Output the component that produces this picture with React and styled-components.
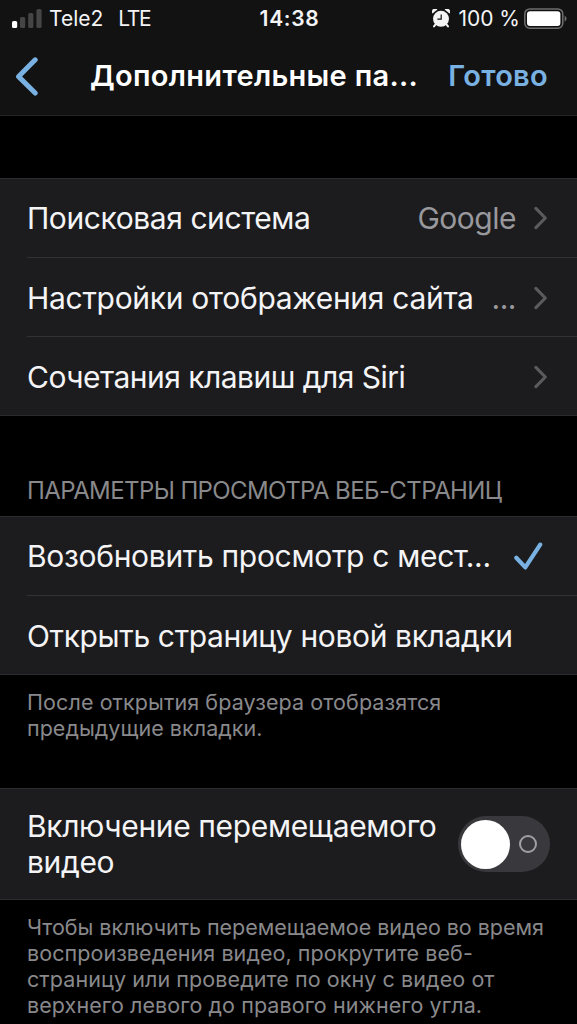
import React, {useState} from 'react';
import styled, {createGlobalStyle} from 'styled-components';

const App = () => {

    const [start, setStart] = useState('resume');
    const [pip, setPip] = useState(false);

    return (
        <Screen>
            <GlobalStyle/>
            <Header>
                <StatusBar>
                    <Carrier>
                        <SignalSvg/>
                        <CarrierName>Tele2</CarrierName>
                        <Network>LTE</Network>
                    </Carrier>
                    <Clock>14:38</Clock>
                    <Power>
                        <AlarmSvg/>
                        <Percent>100 %</Percent>
                        <BatterySvg/>
                    </Power>
                </StatusBar>
                <NavBar>
                    <BackButton aria-label={"Назад"}>
                        <BackSvg/>
                    </BackButton>
                    <Title>Дополнительные па...</Title>
                    <DoneButton>Готово</DoneButton>
                </NavBar>
            </Header>

            <Group $top={62}>
                <Row>
                    <Label $spacing={-0.42}>Поисковая система</Label>
                    <Value>Google</Value>
                    <ChevronSvg/>
                </Row>
                <Row>
                    <Label $spacing={-0.29}>Настройки отображения сайта</Label>
                    <Value>...</Value>
                    <ChevronSvg/>
                </Row>
                <Row>
                    <Label $spacing={-0.52}>Сочетания клавиш для Siri</Label>
                    <ChevronSvg/>
                </Row>
            </Group>

            <SectionTitle>ПАРАМЕТРЫ ПРОСМОТРА ВЕБ-СТРАНИЦ</SectionTitle>
            <Group $top={0}>
                <Row onClick={() => setStart('resume')}>
                    <Label $spacing={-0.31}>Возобновить просмотр с мест...</Label>
                    {start === 'resume' && <CheckSvg/>}
                </Row>
                <Row onClick={() => setStart('newTab')}>
                    <Label $spacing={-0.36}>Открыть страницу новой вкладки</Label>
                    {start === 'newTab' && <CheckSvg/>}
                </Row>
            </Group>
            <Note>
                <Line $spacing={0.09}>После открытия браузера отобразятся</Line>
                <Line $spacing={0.03}>предыдущие вкладки.</Line>
            </Note>

            <Group $top={47}>
                <SwitchRow>
                    <Label $spacing={-0.36}>
                        Включение перемещаемого<br/>
                        видео
                    </Label>
                    <Switch role={"switch"} aria-checked={pip} $on={pip} onClick={() => setPip(!pip)}>
                        <Knob/>
                        <OffMark/>
                    </Switch>
                </SwitchRow>
            </Group>
            <Note>
                <Line $spacing={-0.04}>Чтобы включить перемещаемое видео во время</Line>
                <Line $spacing={0.06}>воспроизведения видео, прокрутите веб-</Line>
                <Line $spacing={0.08}>страницу или проведите по окну с видео от</Line>
                <Line $spacing={0.08}>верхнего левого до правого нижнего угла.</Line>
            </Note>
        </Screen>
    )
}

const SignalSvg = () => (
    <svg width="31" height="20" viewBox="0 0 31 20">
        <rect x="0" y="12" width="5.2" height="7" rx="1.6" fill="#fff"/>
        <rect x="8" y="8" width="5.2" height="11" rx="1.6" fill="#454545"/>
        <rect x="16.2" y="4" width="5.2" height="15" rx="1.6" fill="#454545"/>
        <rect x="24.4" y="0" width="5.2" height="19" rx="1.6" fill="#454545"/>
    </svg>
)

const AlarmSvg = () => (
    <svg width="18" height="19" viewBox="0 0 18 19">
        <g fill="#f4f4f4">
            <circle cx="9" cy="9.8" r="8"/>
            <path d="M0.5 4.6A3.2 3.2 0 0 1 5.4 0.5Z"/>
            <path d="M17.5 4.6A3.2 3.2 0 0 0 12.6 0.5Z"/>
        </g>
        <path d="M3.4 15.6L2 17.4M14.6 15.6L16 17.4" stroke="#f4f4f4" strokeWidth="2" strokeLinecap="round"/>
        <path d="M9.2 5.4V10.1H5.4" fill="none" stroke="#121212" strokeWidth="1.2"/>
    </svg>
)

const BatterySvg = () => (
    <svg width="43" height="22" viewBox="0 0 43 22">
        <rect x="0.8" y="0.9" width="38" height="19.4" rx="5" fill="none" stroke="#6e6e6e" strokeWidth="1.5"/>
        <rect x="3" y="3.2" width="33.4" height="14.8" rx="3" fill="#fff"/>
        <path d="M40.6 7.4Q42.6 8.6 42.6 10.6T40.6 13.8Z" fill="#6e6e6e"/>
    </svg>
)

const BackSvg = () => (
    <svg width="24" height="40" viewBox="0 0 24 40">
        <path d="M20.2 3.8L3.6 20.6L20.2 37" fill="none" stroke="#79b2e2" strokeWidth="5"
              strokeLinecap="round" strokeLinejoin="round"/>
    </svg>
)

const ChevronSvg = () => (
    <svg width="14" height="24" viewBox="0 0 14 24">
        <path d="M1.9 2.4L11.3 12L1.9 21.6" fill="none" stroke="#5b5b5f" strokeWidth="3.1"
              strokeLinecap="round" strokeLinejoin="round"/>
    </svg>
)

const CheckSvg = () => (
    <CheckIcon width="30" height="28" viewBox="0 0 30 28">
        <path d="M2.3 15.8L11.3 25.4L26.2 2.6" fill="none" stroke="#79b2e2" strokeWidth="4.2"
              strokeLinecap="round" strokeLinejoin="round"/>
    </CheckIcon>
)

const CheckIcon = styled.svg`
  margin-right: 4px;
`;

const GlobalStyle = createGlobalStyle`
  * {
    box-sizing: border-box;
  }

  body {
    margin: 0;
    background: #000;
  }

  button {
    padding: 0;
    border: 0;
    background: none;
    font: inherit;
    letter-spacing: inherit;
  }

  svg {
    display: block;
    flex: none;
  }
`;

const Screen = styled.div`
  width: 577px;
  height: 1024px;
  overflow: hidden;
  background: #000;
  color: #f4f4f6;
  font-family: Inter, "Liberation Sans", sans-serif;
  white-space: nowrap;
`;

const Header = styled.header`
  height: 116px;
  background: #121212;
  border-bottom: 1px solid #242424;
`;

const StatusBar = styled.div`
  display: grid;
  grid-template-columns: 1fr auto 1fr;
  align-items: center;
  height: 37px;
  padding: 0 10px 0 12px;
  font-size: 21px;
  line-height: 37px;
`;

const Carrier = styled.div`
  display: flex;
  align-items: center;
`;

const CarrierName = styled.span`
  margin: 0 15px 0 6px;
`;

const Network = styled.span`
  letter-spacing: -1.3px;
`;

const Clock = styled.span`
  font-weight: 600;
  letter-spacing: 0.7px;
`;

const Power = styled.div`
  display: flex;
  align-items: center;
  justify-content: flex-end;
`;

const Percent = styled.span`
  margin: 0 4px 0 8px;
`;

const NavBar = styled.nav`
  display: flex;
  align-items: center;
  height: 77px;
  padding: 0 29px 0 15px;
  font-size: 29px;
  font-weight: 600;
  letter-spacing: 0.3px;
`;

const BackButton = styled.button`
  width: 75px;
`;

const Title = styled.span`
  flex: 1;
  color: #fff;
`;

const DoneButton = styled.button`
  color: #79b2e2;
`;

const Group = styled.section`
  margin-top: ${props => props.$top}px;
  padding-left: 27px;
  background: #1c1c1e;
  border-top: 1px solid #2b2b2d;
  border-bottom: 1px solid #2b2b2d;
`;

const Row = styled.div`
  display: flex;
  align-items: center;
  height: 79px;
  padding-right: 29px;

  & + & {
    padding-top: 1px;
    border-top: 1px solid #323234;
  }

  &:first-child {
    height: 78px;
  }
`;

const Label = styled.span`
  flex: 1;
  font-size: 30px;
  line-height: 36px;
  letter-spacing: ${props => props.$spacing}px;
`;

const Value = styled.span`
  margin-right: 18px;
  color: #98989d;
  font-size: 30px;
  letter-spacing: -0.5px;
`;

const SectionTitle = styled.h2`
  margin: 63px 0 0;
  padding-left: 27px;
  height: 37px;
  color: #89898c;
  font-size: 24px;
  font-weight: 400;
  line-height: 24px;
  letter-spacing: -0.6px;
`;

const Note = styled.p`
  margin: 0;
  padding: 15px 0 0 27px;
  color: #89898c;
  font-size: 21.5px;
  line-height: 25.7px;
`;

const Line = styled.span`
  display: block;
  letter-spacing: ${props => props.$spacing}px;
`;

const SwitchRow = styled.div`
  display: flex;
  align-items: center;
  height: 110px;
  padding-right: 27px;
`;

const Switch = styled.button`
  display: flex;
  flex-direction: ${props => props.$on ? 'row-reverse' : 'row'};
  align-items: center;
  justify-content: space-between;
  width: 92px;
  height: 56px;
  padding: 0 13px 0 3px;
  border-radius: 28px;
  background: ${props => props.$on ? '#79b2e2' : '#39393d'};
`;

const Knob = styled.span`
  width: 49px;
  height: 49px;
  border-radius: 50%;
  background: #fff;
`;

const OffMark = styled.span`
  width: 18px;
  height: 18px;
  border: 2px solid #a0a0a3;
  border-radius: 50%;
`;

export default App;
